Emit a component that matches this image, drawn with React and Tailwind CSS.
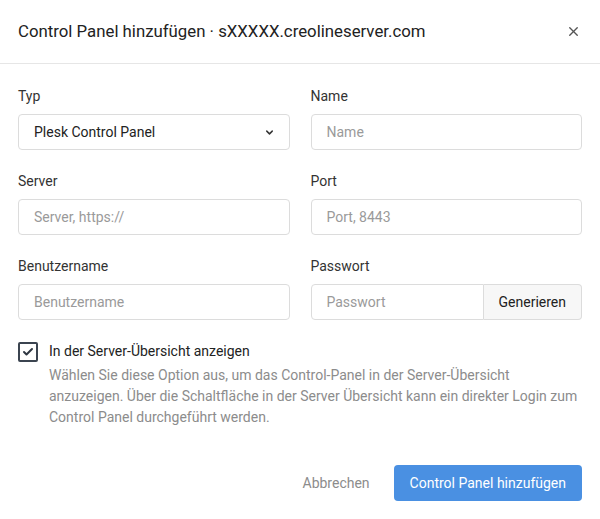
import { ChevronDown, X, Check } from "lucide-react"

function Field({ label, children }) {
  return (
    <div>
      <label className="block text-[14px] leading-5 text-[#333]">{label}</label>
      <div className="mt-2">{children}</div>
    </div>
  )
}

function TextInput({ placeholder }) {
  return (
    <input
      type="text"
      placeholder={placeholder}
      className="h-9 w-full rounded border border-[#dcdcdc] bg-white px-[15px] text-[14px] text-[#333] placeholder:text-[#9a9a9a] outline-none"
    />
  )
}

export default function App() {
  return (
    <div className="min-h-screen bg-white font-['Roboto',Arial,sans-serif] text-[#333]">
      {/* Header */}
      <div className="flex h-16 items-center justify-between border-b border-[#e6e6e6] pl-[18px] pr-[19px]">
        <h1 className="text-[16.8px] text-[#222]">Control Panel hinzufügen · sXXXXX.creolineserver.com</h1>
        <X className="h-[15px] w-[15px] text-[#555]" strokeWidth={2.2} />
      </div>

      {/* Body */}
      <div className="px-[18px] pt-[22px]">
        <div className="grid grid-cols-2 gap-x-[21px] gap-y-[21px]">
          <Field label="Typ">
            <div className="flex h-9 w-full items-center justify-between rounded border border-[#dcdcdc] bg-white pl-[15px] pr-[14px] text-[14px] text-[#222]">
              <span>Plesk Control Panel</span>
              <ChevronDown className="h-[11px] w-[11px] text-[#333]" strokeWidth={3.2} />
            </div>
          </Field>
          <Field label="Name">
            <TextInput placeholder="Name" />
          </Field>
          <Field label="Server">
            <TextInput placeholder="Server, https://" />
          </Field>
          <Field label="Port">
            <TextInput placeholder="Port, 8443" />
          </Field>
          <Field label="Benutzername">
            <TextInput placeholder="Benutzername" />
          </Field>
          <Field label="Passwort">
            <div className="flex h-9 w-full">
              <input
                type="text"
                placeholder="Passwort"
                className="h-9 min-w-0 flex-1 rounded-l border border-[#dcdcdc] bg-white px-[15px] text-[14px] placeholder:text-[#9a9a9a] outline-none"
              />
              <button className="h-9 rounded-r border border-l-0 border-[#dcdcdc] bg-[#f7f7f7] px-[15px] text-[14px] text-[#222]">
                Generieren
              </button>
            </div>
          </Field>
        </div>

        {/* Checkbox */}
        <div className="mt-[21px] flex gap-[11px]">
          <div className="mt-[1px] flex h-[20px] w-[20px] shrink-0 items-center justify-center rounded-[2px] border-2 border-[#3b4450]">
            <Check className="h-3 w-3 text-[#2f3742]" strokeWidth={4} />
          </div>
          <div>
            <div className="text-[14px] leading-5 text-[#222]">In der Server-Übersicht anzeigen</div>
            <p className="mt-[4px] text-[14px] leading-[21px] text-[#8c8c8c]">
              Wählen Sie diese Option aus, um das Control-Panel in der Server-Übersicht anzuzeigen. Über die Schaltfläche in der Server Übersicht kann ein direkter Login zum Control Panel durchgeführt werden.
            </p>
          </div>
        </div>

        {/* Footer */}
        <div className="mt-[37px] flex items-center justify-end gap-[24px]">
          <button className="text-[14px] text-[#8c8c8c]">Abbrechen</button>
          <button className="h-9 rounded bg-[#4a90e2] px-[16px] text-[14px] text-white">
            Control Panel hinzufügen
          </button>
        </div>
      </div>
    </div>
  )
}
